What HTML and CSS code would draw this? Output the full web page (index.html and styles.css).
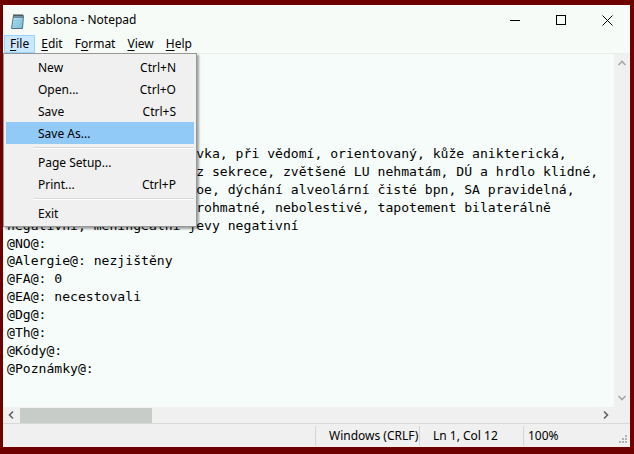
FILE: index.html
```html
<!DOCTYPE html>
<html>
<head>
<meta charset="utf-8">
<title>sablona - Notepad</title>
<link rel="stylesheet" href="styles.css">
</head>
<body>
<div class="window">
  <div class="titlebar">
    <svg class="app-icon" width="16" height="16" viewBox="0 0 16 16">
      <defs>
        <linearGradient id="pg" x1="0" y1="0" x2="1" y2="1">
          <stop offset="0" stop-color="#c9ecf7"/>
          <stop offset="1" stop-color="#6db7d8"/>
        </linearGradient>
      </defs>
      <path d="M3.5 2.5 L13.5 2.5 L12.5 15.5 L1.5 15.5 Z" fill="url(#pg)" stroke="#55707c"/>
      <path d="M3 4.5 L13.2 4.5" stroke="#6f8a96"/>
      <path d="M4 1 v3 M6 1 v3 M8 1 v3 M10 1 v3 M12 1 v3" stroke="#3c4a52" stroke-width="1"/>
      <path d="M3 7.5 H11.5 M2.8 10 H11.3 M2.6 12.5 H11" stroke="#8cc6de" stroke-width="1"/>
    </svg>
    <span class="title">sablona - Notepad</span>
    <div class="controls">
      <div class="ctl"><svg width="10" height="10" viewBox="0 0 10 10"><path d="M0 5.5 H10" stroke="#000" stroke-width="1"/></svg></div>
      <div class="ctl"><svg width="10" height="10" viewBox="0 0 10 10"><rect x="0.5" y="0.5" width="9" height="9" fill="none" stroke="#000" stroke-width="1"/></svg></div>
      <div class="ctl"><svg width="11" height="11" viewBox="0 0 11 11"><path d="M0.5 0.5 L10.5 10.5 M10.5 0.5 L0.5 10.5" stroke="#000" stroke-width="1"/></svg></div>
    </div>
  </div>
  <div class="menubar">
    <span class="mi active"><u>F</u>ile</span>
    <span class="mi"><u>E</u>dit</span>
    <span class="mi">F<u>o</u>rmat</span>
    <span class="mi"><u>V</u>iew</span>
    <span class="mi"><u>H</u>elp</span>
  </div>
  <div class="main">
    <pre class="text">@Pacient@:
@Datum@:
@Lékař@:
@Anamnéza@:
@Obj@:
TT 36,6 °C, klidná postavka, při vědomí, orientovaný, kůže anikterická,
hlava: spojivky, nos. bez sekrece, zvětšené LU nehmatám, DÚ a hrdlo klidné,
hrudník symetrický, eupnoe, dýchání alveolární čisté bpn, SA pravidelná,
břicho měkké, ledvin neprohmatné, nebolestivé, tapotement bilaterálně
negativní, meningeální jevy negativní
@NO@:
@Alergie@: nezjištěny
@FA@: 0
@EA@: necestovali
@Dg@:
@Th@:
@Kódy@:
@Poznámky@:</pre>
    <div class="vscroll">
      <div class="vbtn"><svg width="16" height="17" viewBox="0 0 16 17"><path d="M4.5 11 L8 7.5 L11.5 11" fill="none" stroke="#a6a6a6" stroke-width="1.6"/></svg></div>
      <div class="vtrack"></div>
      <div class="vbtn"><svg width="16" height="17" viewBox="0 0 16 17"><path d="M4.5 6 L8 9.5 L11.5 6" fill="none" stroke="#a6a6a6" stroke-width="1.6"/></svg></div>
    </div>
  </div>
  <div class="hrow">
    <div class="hscroll">
      <div class="hbtn"><svg width="17" height="16" viewBox="0 0 17 16"><path d="M10 4.5 L6.5 8 L10 11.5" fill="none" stroke="#606060" stroke-width="1.6"/></svg></div>
      <div class="htrack"><div class="hthumb"></div></div>
      <div class="hbtn"><svg width="17" height="16" viewBox="0 0 17 16"><path d="M7 4.5 L10.5 8 L7 11.5" fill="none" stroke="#606060" stroke-width="1.6"/></svg></div>
    </div>
    <div class="corner"></div>
  </div>
  <div class="status">
    <div class="spacer"></div>
    <div class="panel p1">Windows (CRLF)</div>
    <div class="panel p2">Ln 1, Col 12</div>
    <div class="panel p3">100%
      <svg class="grip" width="12" height="12" viewBox="0 0 12 12">
        <rect x="9" y="1" width="2" height="2" fill="#b0b0b0"/>
        <rect x="6" y="4" width="2" height="2" fill="#b0b0b0"/>
        <rect x="9" y="4" width="2" height="2" fill="#b0b0b0"/>
        <rect x="3" y="7" width="2" height="2" fill="#b0b0b0"/>
        <rect x="6" y="7" width="2" height="2" fill="#b0b0b0"/>
        <rect x="9" y="7" width="2" height="2" fill="#b0b0b0"/>
      </svg>
    </div>
  </div>
  <div class="dropdown">
    <div class="item"><span>New</span><span class="key">Ctrl+N</span></div>
    <div class="item"><span>Open...</span><span class="key">Ctrl+O</span></div>
    <div class="item"><span>Save</span><span class="key">Ctrl+S</span></div>
    <div class="item hl"><span>Save As...</span><span class="key"></span></div>
    <div class="sep"></div>
    <div class="item"><span>Page Setup...</span><span class="key"></span></div>
    <div class="item"><span>Print...</span><span class="key">Ctrl+P</span></div>
    <div class="sep"></div>
    <div class="item"><span>Exit</span><span class="key"></span></div>
  </div>
</div>
</body>
</html>
```
FILE: styles.css
```css
html, body {
  margin: 0;
  padding: 0;
}
body {
  background: #6f0000;
  width: 634px;
  height: 454px;
  overflow: hidden;
  font-family: "Segoe UI", "Noto Sans", "Open Sans", sans-serif;
  font-size: 12px;
  color: #000;
}
.window {
  position: relative;
  margin: 5px 4px 0 3px;
  width: 627px;
  height: 442px;
  display: flex;
  flex-direction: column;
  background: #f6fbf8;
}
.titlebar {
  height: 30px;
  display: flex;
  align-items: center;
  flex: none;
}
.app-icon {
  margin-left: 7px;
  margin-top: 1px;
  flex: none;
}
.title {
  margin-left: 7px;
  font-size: 12px;
  line-height: 16px;
}
.controls {
  margin-left: auto;
  display: flex;
  height: 30px;
}
.ctl {
  width: 46px;
  height: 30px;
  display: flex;
  align-items: center;
  justify-content: center;
}
.ctl svg {
  display: block;
}
.menubar {
  height: 18px;
  display: flex;
  padding-left: 1px;
  flex: none;
}
.mi {
  height: 16px;
  line-height: 16px;
  padding: 0 5px;
  border: 1px solid transparent;
  font-size: 12px;
}
.mi u {
  text-decoration-thickness: 1px;
  text-underline-offset: 2px;
}
.mi.active {
  background: #cce8ff;
  border-color: #99d1ff;
}
.main {
  flex: none;
  height: 353px;
  display: flex;
  border-top: 1px solid #ececec;
}
.text {
  flex: 1;
  margin: 0;
  padding: 2px 0 0 4px;
  font-family: "DejaVu Sans Mono", "Liberation Mono", monospace;
  font-size: 13.1px;
  line-height: 17.86px;
  white-space: pre;
  overflow: hidden;
  background: #f6fcf9;
  color: #000;
}
.vscroll {
  width: 16px;
  flex: none;
  display: flex;
  flex-direction: column;
  background: #f0f0f0;
}
.vbtn {
  height: 17px;
}
.vbtn svg, .hbtn svg {
  display: block;
}
.vtrack {
  flex: 1;
}
.hrow {
  height: 16px;
  display: flex;
  flex: none;
}
.hscroll {
  flex: 1;
  display: flex;
  background: #f0f0f0;
}
.hbtn {
  width: 17px;
  flex: none;
}
.htrack {
  flex: 1;
  display: flex;
  padding-top: 1px;
}
.hthumb {
  width: 132px;
  height: 15px;
  background: #c8ccc9;
}
.corner {
  width: 16px;
  background: #f0f0f0;
}
.status {
  height: 23px;
  flex: none;
  display: flex;
  background: #f0f0f0;
  border-top: 1px solid #d9d9d9;
}
.spacer {
  width: 312px;
  flex: none;
}
.panel {
  position: relative;
  border-left: 1px solid #d4d4d4;
  margin: 2px 0 1px;
  line-height: 19px;
  font-size: 12px;
  white-space: nowrap;
}
.p1 {
  width: 90px;
  padding-left: 13px;
}
.p2 {
  width: 90px;
  padding-left: 13px;
}
.p3 {
  flex: 1;
  padding-left: 4px;
}
.grip {
  position: absolute;
  right: 2px;
  bottom: 0px;
}
.dropdown {
  position: absolute;
  left: 0;
  top: 48px;
  width: 188px;
  padding: 2px;
  background: #f0f0f0;
  border: 1px solid #979797;
  box-sizing: content-box;
  box-shadow: 2px 2px 2px rgba(0, 0, 0, 0.35);
}
.item {
  height: 22px;
  display: flex;
  align-items: center;
  justify-content: space-between;
  padding: 0 18px 0 32px;
  font-size: 12px;
}
.item.hl {
  background: #91c9f7;
}
.sep {
  height: 7px;
  margin-left: 28px;
  position: relative;
}
.sep::after {
  content: "";
  position: absolute;
  left: 0;
  right: 0;
  top: 3px;
  height: 1px;
  background: #d7d7d7;
  border-bottom: 1px solid #ffffff;
}
```
